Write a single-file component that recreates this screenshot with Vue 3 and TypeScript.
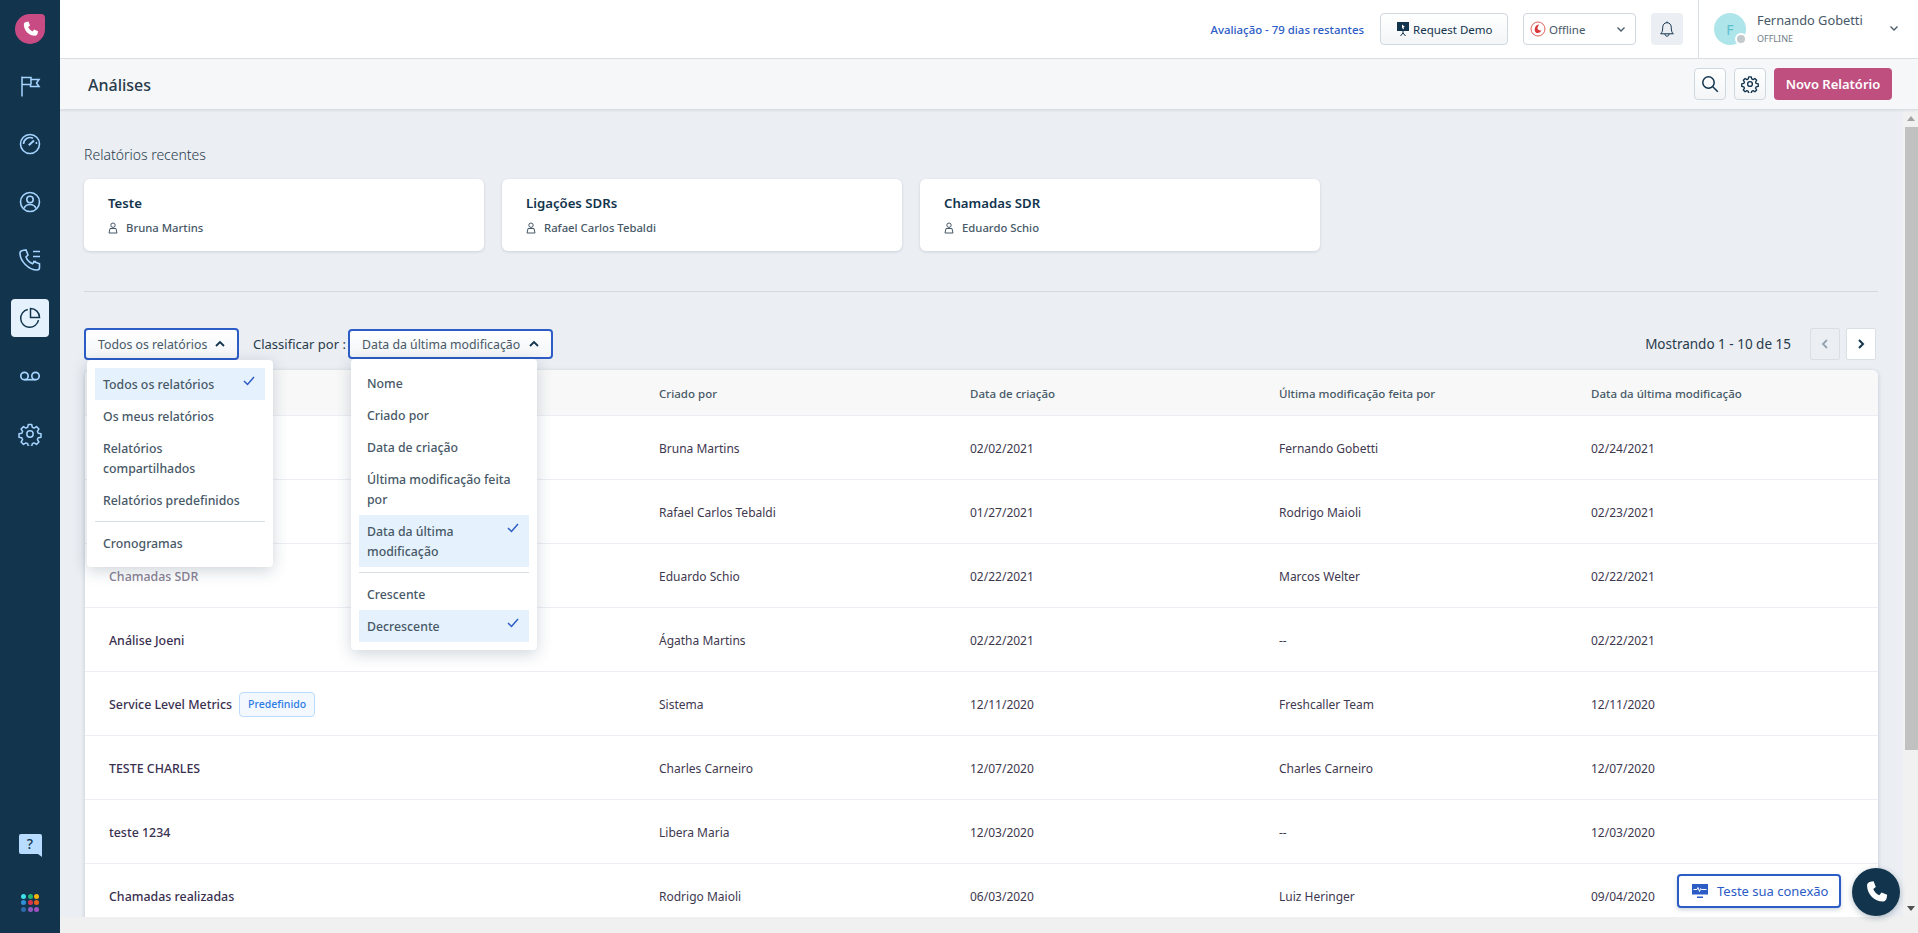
<script setup lang="ts">
interface Row { name: string; tag?: boolean; muted?: boolean; by: string; created: string; mod: string; modDate: string }
const rows: Row[] = [
  { name: 'Teste', by: 'Bruna Martins', created: '02/02/2021', mod: 'Fernando Gobetti', modDate: '02/24/2021' },
  { name: 'Ligações SDRs', by: 'Rafael Carlos Tebaldi', created: '01/27/2021', mod: 'Rodrigo Maioli', modDate: '02/23/2021' },
  { name: 'Chamadas SDR', muted: true, by: 'Eduardo Schio', created: '02/22/2021', mod: 'Marcos Welter', modDate: '02/22/2021' },
  { name: 'Análise Joeni', by: 'Ágatha Martins', created: '02/22/2021', mod: '--', modDate: '02/22/2021' },
  { name: 'Service Level Metrics', tag: true, by: 'Sistema', created: '12/11/2020', mod: 'Freshcaller Team', modDate: '12/11/2020' },
  { name: 'TESTE CHARLES', by: 'Charles Carneiro', created: '12/07/2020', mod: 'Charles Carneiro', modDate: '12/07/2020' },
  { name: 'teste 1234', by: 'Libera Maria', created: '12/03/2020', mod: '--', modDate: '12/03/2020' },
  { name: 'Chamadas realizadas', by: 'Rodrigo Maioli', created: '06/03/2020', mod: 'Luiz Heringer', modDate: '09/04/2020' },
]
const recents = [
  { t: 'Teste', a: 'Bruna Martins' },
  { t: 'Ligações SDRs', a: 'Rafael Carlos Tebaldi' },
  { t: 'Chamadas SDR', a: 'Eduardo Schio' },
]
const dots = ['#3fe0e8', '#22b573', '#f5b50a', '#2f8fd8', '#d9344e', '#e8611a', '#2c6aa8', '#8e5cc0', '#a050c0']
</script>

<template>
  <div class="app">
    <aside class="side">
      <div class="logo">
        <svg width="19" height="19" viewBox="0 0 24 24"><path fill="#fff" d="M6.6 2.5 9.4 2l2 5-2.3 1.900c1 2.400 2.900 4.400 5.400 5.600l2-2.400 5 2-.5 3c-.3 1.600-1.600 2.900-3.200 2.900C10 20 3.600 13.200 3.600 5.700 3.600 4 5 2.800 6.600 2.500Z"/></svg>
      </div>
      <nav class="nav">
        <div class="nv"><svg width="24" height="24" viewBox="0 0 24 24" fill="none" stroke="#a6d4ff" stroke-width="1.500"><path d="M4 2.500v20M4 3.500h9v2h8l-2.500 3.500 2.500 3.500h-8.500v-2H4"/><path d="M13 5.500v5"/></svg></div>
        <div class="nv"><svg width="24" height="24" viewBox="0 0 24 24" fill="none" stroke="#a6d4ff" stroke-width="1.600"><circle cx="12" cy="12" r="9.500"/><path d="M5.500 12a6.500 6.500 0 0 1 9.500-5.700M18.500 12c0-.8-.1-1.400-.4-2"/><path d="M10.800 13.200 16 8.500" stroke-width="2"/></svg></div>
        <div class="nv"><svg width="24" height="24" viewBox="0 0 24 24" fill="none" stroke="#a6d4ff" stroke-width="1.600"><circle cx="12" cy="12" r="9.500"/><circle cx="12" cy="9.500" r="3.200"/><path d="M6 18.500c1-2.800 3-4 6-4s5 1.200 6 4"/></svg></div>
        <div class="nv"><svg width="24" height="24" viewBox="0 0 24 24" fill="none" stroke="#a6d4ff" stroke-width="1.600"><path d="M4.500 2.500 8 2l2 5-2 2c1 2.800 3.500 5.400 6.500 6.700l1.800-2 5.200 2v3.800c0 1.300-1 2.500-2.500 2.500C10.500 22 2 13 2 5c0-1.300 1.200-2.200 2.500-2.500Z"/><path d="M15 3.500h7M15 8.500h7M15 13.500h3"/></svg></div>
        <div class="nv on"><svg width="24" height="24" viewBox="0 0 24 24" fill="none" stroke="#12344d" stroke-width="1.500"><path d="M9.800 3.500A9 9 0 1 0 20.500 14.200"/><path d="M12.500 2.500V11.500H21.500A9 9 0 0 0 12.500 2.500Z"/></svg></div>
        <div class="nv"><svg width="24" height="24" viewBox="0 0 24 24" fill="none" stroke="#a6d4ff" stroke-width="1.700"><circle cx="6.500" cy="12" r="3.700"/><circle cx="17.500" cy="12" r="3.700"/><path d="M6.500 15.700h11"/></svg></div>
        <div class="nv"><svg width="24" height="24" viewBox="0 0 24 24" fill="none" stroke="#a6d4ff" stroke-width="1.500"><circle cx="12" cy="12" r="3.200"/><path d="M10.300 2.500h3.400l.6 2.800 1.800.8 2.400-1.500 2.400 2.400-1.500 2.400.8 1.800 2.800.6v3.400l-2.800.6-.8 1.800 1.500 2.400-2.400 2.400-2.400-1.500-1.800.8-.6 2.800h-3.400l-.6-2.800-1.800-.8-2.400 1.500-2.400-2.400 1.500-2.400-.8-1.800-2.800-.6v-3.400l2.800-.6.8-1.800-1.500-2.400 2.400-2.400 2.400 1.500 1.800-.8Z" stroke-linejoin="round"/></svg></div>
      </nav>
      <div class="side-b">
        <div class="help">?</div>
        <div class="grid9"><i v-for="d in dots" :key="d" :style="{ background: d }"></i></div>
      </div>
    </aside>

    <main class="main">
      <header class="top">
        <span class="trial">Avaliação - 79 dias restantes</span>
        <button class="tb demo">
          <svg width="14" height="16" viewBox="0 0 14 16"><path fill="#12344d" d="M1 1h12v9H1z"/><path fill="#fff" d="M6 3.500 9 6 7.400 6.300 8 8 7 8.200 6.500 6.700 6 7.500Z"/><path stroke="#12344d" fill="none" d="M7 10v3M7 12l-2.500 3M7 12l2.500 3"/></svg>
          Request Demo
        </button>
        <button class="tb status">
          <svg width="16" height="16" viewBox="0 0 16 16" fill="none"><circle cx="8" cy="8" r="7" stroke="#e2605b" stroke-width="1"/><path fill="#d9363a" d="M9.500 3.500A4.800 4.800 0 0 0 6.500 12a5 5 0 0 0 5-2.500A4.500 4.500 0 0 1 7.500 8c0-2 .8-3.700 2-4.500Z"/></svg>
          <span>Offline</span>
          <svg class="push" width="10" height="10" viewBox="0 0 10 10" fill="none" stroke="#475867" stroke-width="1.300"><path d="m1.500 3.500 3.500 3.500 3.500-3.500"/></svg>
        </button>
        <div class="bell">
          <svg width="18" height="18" viewBox="0 0 18 18" fill="none" stroke="#12344d" stroke-width="1"><path d="M9 1.500v1.200M9 2.700c-2.800 0-4.300 2.100-4.300 5 0 3.300-.6 4.700-2 6.100h12.600c-1.400-1.400-2-2.800-2-6.100 0-2.900-1.500-5-4.300-5Z"/><path d="M7 14c0 1.300.8 2.200 2 2.200s2-.9 2-2.200"/></svg>
        </div>
        <div class="user">
          <div class="avatar">F<span class="dot"></span></div>
          <div class="uinfo">
            <div class="uname">Fernando Gobetti</div>
            <div class="ust">OFFLINE</div>
          </div>
          <svg class="uchev" width="10" height="10" viewBox="0 0 10 10" fill="none" stroke="#475867" stroke-width="1.300"><path d="m1.500 3.500 3.500 3.500 3.500-3.500"/></svg>
        </div>
      </header>

      <div class="sub">
        <h1>Análises</h1>
        <div class="acts">
          <button class="ib"><svg width="18" height="18" viewBox="0 0 18 18" fill="none" stroke="#12344d" stroke-width="1.500"><circle cx="7.500" cy="7.500" r="5.700"/><path d="m11.800 11.800 5 5"/></svg></button>
          <button class="ib"><svg width="18" height="18" viewBox="0 0 24 24" fill="none" stroke="#12344d" stroke-width="1.800"><circle cx="12" cy="12" r="3.200"/><path d="M10.300 2.500h3.400l.6 2.800 1.800.8 2.400-1.500 2.400 2.400-1.500 2.400.8 1.800 2.800.6v3.400l-2.800.6-.8 1.800 1.500 2.400-2.400 2.400-2.400-1.500-1.800.8-.6 2.800h-3.400l-.6-2.800-1.800-.8-2.400 1.500-2.400-2.400 1.500-2.400-.8-1.800-2.800-.6v-3.400l2.800-.6.8-1.800-1.500-2.400 2.400-2.400 2.400 1.500 1.800-.8Z" stroke-linejoin="round"/></svg></button>
          <button class="primary">Novo Relatório</button>
        </div>
      </div>

      <div class="body">
        <div class="scroll">
          <div class="content">
            <h2>Relatórios recentes</h2>
            <div class="cards">
              <div v-for="r in recents" :key="r.t" class="card">
                <div class="ct">{{ r.t }}</div>
                <div class="ca">
                  <svg width="10" height="12" viewBox="0 0 10 12" fill="none" stroke="#475867" stroke-width="1"><circle cx="5" cy="3.200" r="2.200"/><path d="M1 11l1-4.500h6l1 4.500Z"/></svg>
                  {{ r.a }}
                </div>
              </div>
            </div>
            <div class="hr"></div>
            <div class="toolbar">
              <div class="dd-wrap">
                <button class="sel first">Todos os relatórios
                  <svg width="10" height="8" viewBox="0 0 10 8" fill="none" stroke="#12344d" stroke-width="1.800"><path d="m1 6 4-4 4 4"/></svg>
                </button>
                <div class="menu m1">
                  <div class="it active">Todos os relatórios<svg class="ck" width="12" height="10" viewBox="0 0 12 10" fill="none" stroke="#2c5cc5" stroke-width="1.500"><path d="m1 5 3.500 3.500L11 1"/></svg></div>
                  <div class="it">Os meus relatórios</div>
                  <div class="it">Relatórios compartilhados</div>
                  <div class="it">Relatórios predefinidos</div>
                  <div class="sep"></div>
                  <div class="it">Cronogramas</div>
                </div>
              </div>
              <span class="lbl">Classificar por :</span>
              <div class="dd-wrap">
                <button class="sel second">Data da última modificação
                  <svg width="10" height="8" viewBox="0 0 10 8" fill="none" stroke="#12344d" stroke-width="1.800"><path d="m1 6 4-4 4 4"/></svg>
                </button>
                <div class="menu m2">
                  <div class="it">Nome</div>
                  <div class="it">Criado por</div>
                  <div class="it">Data de criação</div>
                  <div class="it">Última modificação feita por</div>
                  <div class="it active">Data da última modificação<svg class="ck" width="12" height="10" viewBox="0 0 12 10" fill="none" stroke="#2c5cc5" stroke-width="1.500"><path d="m1 5 3.500 3.500L11 1"/></svg></div>
                  <div class="sep"></div>
                  <div class="it">Crescente</div>
                  <div class="it active">Decrescente<svg class="ck" width="12" height="10" viewBox="0 0 12 10" fill="none" stroke="#2c5cc5" stroke-width="1.500"><path d="m1 5 3.500 3.500L11 1"/></svg></div>
                </div>
              </div>
              <span class="count">Mostrando 1 - 10 de 15</span>
              <button class="pg dis"><svg width="8" height="12" viewBox="0 0 8 12" fill="none" stroke="#92a2b1" stroke-width="1.800"><path d="M6 2 2 6l4 4"/></svg></button>
              <button class="pg"><svg width="8" height="12" viewBox="0 0 8 12" fill="none" stroke="#12344d" stroke-width="2"><path d="m2 2 4 4-4 4"/></svg></button>
            </div>
            <div class="table">
              <div class="tr th">
                <div>Nome</div><div>Criado por</div><div>Data de criação</div><div>Última modificação feita por</div><div>Data da última modificação</div>
              </div>
              <div v-for="r in rows" :key="r.name" class="tr">
                <div class="nm" :class="{ muted: r.muted }">{{ r.name }}<span v-if="r.tag" class="tag">Predefinido</span></div>
                <div>{{ r.by }}</div><div>{{ r.created }}</div><div>{{ r.mod }}</div><div>{{ r.modDate }}</div>
              </div>
            </div>
          </div>
          <div class="vbar"><span class="up"></span><span class="thumb"></span><span class="down"></span></div>
        </div>
        <div class="hbar"></div>
        <button class="conn">
          <svg width="16" height="14" viewBox="0 0 16 14"><path fill="#2c5cc5" d="M0 0h16v10.500H0zM5 12.500h6V14H5z"/><path fill="none" stroke="#fff" d="M1.500 5.500h3.500l1-2 1.500 4 1.200-3 .8 1h5"/></svg>
          Teste sua conexão
        </button>
        <button class="call"><svg width="27" height="27" viewBox="0 0 24 24"><path fill="#fff" d="M6.600 2.500 9.400 2l2 5-2.300 1.900c1 2.400 2.900 4.400 5.400 5.600l2-2.400 5 2-.5 3c-.3 1.600-1.600 2.900-3.200 2.900C10 20 3.600 13.200 3.600 5.700 3.600 4 5 2.800 6.600 2.500Z"/></svg></button>
      </div>
    </main>
  </div>
</template>

<style>
html, body { margin: 0; height: 100%; overflow: hidden; }
</style>

<style scoped>
.app { display: flex; height: 933px; width: 1918px; font-family: "Noto Sans", "Open Sans", sans-serif; font-size: 12px; color: #12344d; overflow: hidden; }
button { font-family: inherit; cursor: pointer; }
.side { width: 60px; flex: none; background: #12344d; display: flex; flex-direction: column; align-items: center; }
.logo { width: 30px; height: 30px; margin-top: 14px; background: #c94b84; border-radius: 50% 4px 50% 50%; display: flex; align-items: center; justify-content: center; }
.nav { display: flex; flex-direction: column; align-items: center; margin-top: 23px; }
.nv { width: 38px; height: 38px; margin-bottom: 20px; border-radius: 4px; display: flex; align-items: center; justify-content: center; }
.nv.on { background: #e5f2fd; }
.side-b { margin-top: auto; display: flex; flex-direction: column; align-items: center; margin-bottom: 21px; }
.help { width: 23px; height: 20px; background: #b7dcff; color: #12344d; font-size: 14px; font-weight: 500; text-align: center; line-height: 20px; border-radius: 2px 2px 0 2px; margin-bottom: 40px; position: relative; }
.help::after { content: ""; position: absolute; right: 0; bottom: -3px; border-top: 3px solid #b7dcff; border-left: 4px solid transparent; }
.grid9 { display: grid; grid-template-columns: repeat(3, 5px); gap: 1.670px; }
.grid9 i { width: 5px; height: 5px; border-radius: 50%; display: block; }

.main { flex: 1; min-width: 0; display: flex; flex-direction: column; }
.top { height: 58px; flex: none; background: #fff; border-bottom: 1px solid #dadfe3; display: flex; align-items: center; justify-content: flex-end; box-sizing: content-box; }
.trial { color: #2c5cc5; font-size: 11.400px; font-weight: 500; margin-right: 16px; }
.tb { height: 32px; box-sizing: border-box; border: 1px solid #cfd7df; border-radius: 4px; background: linear-gradient(#fff, #f3f5f7); color: #12344d; font-size: 11.500px; display: flex; align-items: center; padding: 0; }
.demo { width: 128px; padding-left: 15px; gap: 3px; margin-right: 15px; }
.status { width: 113px; padding: 0 9px 0 6px; gap: 3px; background: #fff; margin-right: 15px; color: #475867; }
.push { margin-left: auto; }
.bell { width: 32px; height: 32px; background: #ebeff3; border-radius: 4px; display: flex; align-items: center; justify-content: center; margin-right: 15px; }
.user { width: 220px; height: 58px; border-left: 1px solid #dadfe3; box-sizing: border-box; display: flex; align-items: center; padding-left: 15px; position: relative; }
.avatar { width: 32px; height: 32px; border-radius: 50%; background: #aee5ea; color: #5cc0cc; font-size: 14px; display: flex; align-items: center; justify-content: center; position: relative; }
.dot { position: absolute; right: -1px; bottom: 0; width: 8px; height: 8px; background: #c4c9cc; border: 2px solid #fff; border-radius: 50%; }
.uinfo { margin-left: 11px; margin-top: -2px; }
.uname { font-size: 12.800px; line-height: 18px; color: #475867; }
.ust { font-size: 9px; line-height: 13px; color: #6f7c87; margin-top: 3px; }
.uchev { position: absolute; right: 19px; top: 23px; }

.sub { height: 50px; flex: none; background: #f5f7f9; border-bottom: 1px solid #dadfe3; box-shadow: 0 1px 2px rgba(18,52,77,.08); display: flex; align-items: center; justify-content: space-between; padding: 0 26px 0 28px; position: relative; z-index: 2; }
h1 { margin: 2px 0 0; font-size: 16px; font-weight: 500; color: #283b4b; }
.acts { display: flex; gap: 8px; }
.ib { width: 32px; height: 32px; box-sizing: border-box; padding: 0; border: 1px solid #cfd7df; border-radius: 4px; background: linear-gradient(#fff, #f3f5f7); display: flex; align-items: center; justify-content: center; }
.primary { width: 118px; height: 32px; border: 0; border-radius: 4px; background: #bf4f7f; color: #fff; font-size: 13px; font-weight: 600; padding: 0; }

.body { flex: 1; min-height: 0; position: relative; display: flex; flex-direction: column; background: #f0f0f0; }
.scroll { flex: 1; min-height: 0; display: flex; }
.hbar { height: 16px; flex: none; background: #f0f0f0; }
.content { flex: 1; min-width: 0; background: #ebeef3; padding: 0 25px 0 24px; overflow: hidden; }
.vbar { width: 15px; flex: none; background: #f1f1f1; position: relative; }
.thumb { position: absolute; left: 2px; right: 0; top: 17px; height: 623px; background: #c1c1c1; }
.up, .down { position: absolute; left: 4px; border-left: 4px solid transparent; border-right: 4px solid transparent; }
.up { top: 6px; border-bottom: 5px solid #a3a3a3; }
.down { bottom: 6px; border-top: 5px solid #505050; }

h2 { margin: 0; padding-top: 35px; font-size: 14px; line-height: 20px; font-weight: 300; color: #283b4b; }
.cards { display: flex; gap: 18px; margin-top: 14px; }
.card { width: 400px; height: 72px; box-sizing: border-box; background: #fff; border-radius: 6px; box-shadow: 0 1px 3px rgba(18,52,77,.15); padding: 14px 24px; }
.ct { font-size: 13.200px; font-weight: 600; line-height: 20px; color: #12344d; }
.ca { display: flex; align-items: center; gap: 8px; font-size: 11.300px; line-height: 18px; font-weight: 500; color: #475867; margin-top: 6px; }
.hr { height: 1px; background: #d3d9df; margin-top: 40px; }
.toolbar { display: flex; align-items: center; height: 32px; margin-top: 36px; position: relative; z-index: 3; }
.dd-wrap { position: relative; }
.sel { height: 32px; box-sizing: border-box; border: 2px solid #2c5cc5; border-radius: 4px; background: linear-gradient(#fff, #f3f5f7); display: flex; align-items: center; justify-content: space-between; font-size: 12.300px; color: #475867; padding: 0 12px; font-weight: 400; white-space: nowrap; }
.first { width: 155px; }
.second { width: 205px; height: 30px; }
.lbl { margin: 0 3px 0 14px; font-size: 13px; color: #283b4b; width: 92px; white-space: nowrap; }
.count { margin-left: auto; margin-right: 19px; font-size: 13.500px; color: #283b4b; }
.pg { width: 30px; height: 32px; box-sizing: border-box; padding: 0; border: 1px solid #dadfe3; border-radius: 2px; background: #fff; display: flex; align-items: center; justify-content: center; margin-right: 6px; }
.pg:last-child { margin-right: 2px; }
.pg.dis { background: #ebeef3; }
.menu { position: absolute; top: 32px; background: #fff; border-radius: 4px; box-shadow: 0 4px 16px rgba(18,52,77,.2); width: 186px; box-sizing: border-box; padding: 8px; z-index: 5; }
.m1 { left: 3px; }
.m2 { left: 3px; top: 30px; }
.it { position: relative; padding: 7px 12px 5px 8px; font-size: 12.300px; line-height: 20px; font-weight: 500; color: #475867; }
.it.active { background: #e5f2fd; }
.ck { position: absolute; right: 10px; top: 8px; }
.sep { height: 1px; background: #dadfe3; margin: 5px 0; }

.table { margin-top: 10px; margin-left: 1px; background: #fff; border-radius: 6px 6px 0 0; box-shadow: 0 1px 4px rgba(18,52,77,.2); }
.tr { display: grid; grid-template-columns: 550px 311px 309px 312px 1fr; height: 64px; align-items: center; padding: 2px 24px 0; border-top: 1px solid #ebeff3; box-sizing: border-box; color: #40384f; font-size: 12px; }
.tr > div { padding-right: 8px; }
.th { height: 45px; background: #f8f8f8; border-top: 0; border-radius: 6px 6px 0 0; color: #475867; font-weight: 500; font-size: 11.500px; }
.nm { font-weight: 500; font-size: 12.400px; color: #3a3050; display: flex; align-items: center; }
.nm.muted { color: #8a8294; }
.tag { margin-left: 7px; height: 25px; box-sizing: border-box; border: 1px solid #bbdcfe; background: #f3f8ff; border-radius: 4px; padding: 0 8px; color: #2c7be5; font-size: 10.500px; font-weight: 500; line-height: 23px; }

.conn { position: absolute; right: 77px; bottom: 25px; width: 164px; height: 34px; box-sizing: border-box; border: 2px solid #2c5cc5; border-radius: 4px; background: #fff; color: #2c5cc5; font-size: 13px; display: flex; align-items: center; gap: 9px; padding: 0 0 0 13px; box-shadow: 0 2px 4px rgba(18,52,77,.2); }
.call { position: absolute; right: 18px; bottom: 17px; width: 48px; height: 48px; padding: 0; border: 0; border-radius: 50%; background: #12344d; display: flex; align-items: center; justify-content: center; box-shadow: 0 2px 6px rgba(18,52,77,.3); }
</style>
